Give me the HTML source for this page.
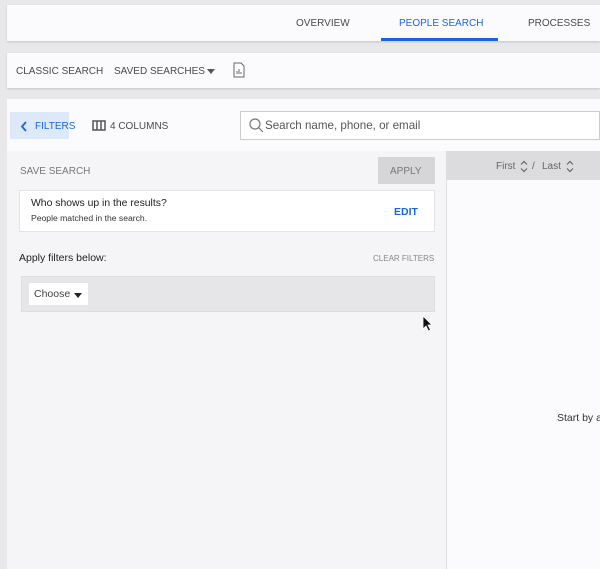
<!DOCTYPE html>
<html><head><style>
*{box-sizing:border-box;margin:0;padding:0}
body{width:600px;height:569px;overflow:hidden;background:#e8e7ea;font-family:"Liberation Sans",sans-serif;position:relative}
.abs{position:absolute}
.bar{left:7px;right:0;background:#fbfbfd;box-shadow:0 1px 2px rgba(0,0,0,.15)}
.t{position:absolute;font-size:10px;color:#4a4a4a;white-space:nowrap}
</style></head><body>
<div class="abs bar" style="top:5px;height:36px"></div>
<div class="t" style="left:296px;top:18px">OVERVIEW</div>
<div class="t" style="left:399px;top:18px;color:#1a66d9">PEOPLE SEARCH</div>
<div class="abs" style="left:381px;top:38px;width:117px;height:3px;background:#1a66d9"></div>
<div class="t" style="left:528px;top:18px">PROCESSES</div>

<div class="abs bar" style="top:53px;height:35px"></div>
<div class="t" style="left:16px;top:66px">CLASSIC SEARCH</div>
<div class="t" style="left:114px;top:66px">SAVED SEARCHES</div>
<div class="abs" style="left:207px;top:69px;border-left:4px solid transparent;border-right:4px solid transparent;border-top:5px solid #555"></div>
<svg class="abs" style="left:233px;top:62px" width="12" height="16"><path d="M1 1h7l3 3v11H1z" fill="#fff" stroke="#666"/><path d="M4 12V9M6 12V7M8 12V10" stroke="#666"/></svg>

<div class="abs" style="left:7px;top:99px;right:0;bottom:0;background:#fbfbfd"></div>
<div class="abs" style="left:10px;top:112px;width:59px;height:27px;background:#dde9f8"></div>
<svg class="abs" style="left:20px;top:121px" width="8" height="11"><path d="M6 1L2 5.5 6 10" fill="none" stroke="#1a66d9" stroke-width="1.8"/></svg>
<div class="t" style="left:35px;top:121px;color:#1a66d9">FILTERS</div>
<svg class="abs" style="left:92px;top:120px" width="14" height="11"><rect x="1" y="1" width="12" height="9" fill="none" stroke="#555" stroke-width="1.5"/><path d="M5 1v9M9 1v9" stroke="#555" stroke-width="1.5"/></svg>
<div class="t" style="left:110px;top:121px">4 COLUMNS</div>
<div class="abs" style="left:240px;top:111px;right:0;height:29px;border:1px solid #ccc;background:#fff"></div>
<svg class="abs" style="left:249px;top:118px" width="15" height="15"><circle cx="6" cy="6" r="5" fill="none" stroke="#777" stroke-width="1.2"/><path d="M9.5 9.5l4.5 4.5" stroke="#777" stroke-width="1.2"/></svg>
<div class="t" style="left:265px;top:119px;font-size:11.6px;color:#555">Search name, phone, or email</div>

<div class="abs" style="left:7px;top:151px;width:440px;bottom:0;background:#f5f4f7"></div>
<div class="abs" style="left:446px;top:151px;width:1px;bottom:0;background:#ddd"></div>
<div class="abs" style="left:447px;top:151px;right:0;height:29px;background:#dcdbde"></div>
<div class="t" style="left:496px;top:161px;color:#666">First</div>
<svg class="abs" style="left:520px;top:160px" width="8" height="13"><path d="M1 4.5L4 1.5 7 4.5M1 8.5L4 11.5 7 8.5" fill="none" stroke="#666" stroke-width="1.2"/></svg>
<div class="t" style="left:532px;top:161px;color:#666">/</div>
<div class="t" style="left:542px;top:161px;color:#666">Last</div>
<svg class="abs" style="left:566px;top:160px" width="8" height="13"><path d="M1 4.5L4 1.5 7 4.5M1 8.5L4 11.5 7 8.5" fill="none" stroke="#666" stroke-width="1.2"/></svg>
<div class="t" style="left:557px;top:412px;color:#333;font-size:10.5px">Start by a</div>

<div class="t" style="left:20px;top:166px;color:#777">SAVE SEARCH</div>
<div class="abs" style="left:378px;top:157px;width:57px;height:27px;background:#d6d5d8"></div>
<div class="t" style="left:390px;top:166px;color:#777">APPLY</div>
<div class="abs" style="left:19px;top:190px;width:416px;height:42px;background:#fff;border:1px solid #e3e3e3"></div>
<div class="t" style="left:31px;top:198px;color:#222;font-size:10.4px">Who shows up in the results?</div>
<div class="t" style="left:31px;top:213px;color:#333;font-size:8.6px">People matched in the search.</div>
<div class="t" style="left:394px;top:206px;color:#1a66d9;font-weight:bold;font-size:10.5px">EDIT</div>
<div class="t" style="left:19px;top:252px;color:#222;font-size:10.5px">Apply filters below:</div>
<div class="t" style="left:373px;top:254px;color:#888;font-size:8px">CLEAR FILTERS</div>
<div class="abs" style="left:21px;top:276px;width:414px;height:36px;background:#e6e5e8;border:1px solid #ddd"></div>
<div class="abs" style="left:29px;top:283px;width:59px;height:22px;background:#fff"></div>
<div class="t" style="left:34px;top:288px;color:#444;font-size:10.5px">Choose</div>
<div class="abs" style="left:74px;top:293px;border-left:4px solid transparent;border-right:4px solid transparent;border-top:5px solid #222"></div>
<svg class="abs" style="left:422px;top:315px" width="12" height="17"><path d="M1 1v13l3-3 2.5 5 2-1-2.5-5h4z" fill="#111" stroke="#fff" stroke-width=".8"/></svg>
</body></html>
